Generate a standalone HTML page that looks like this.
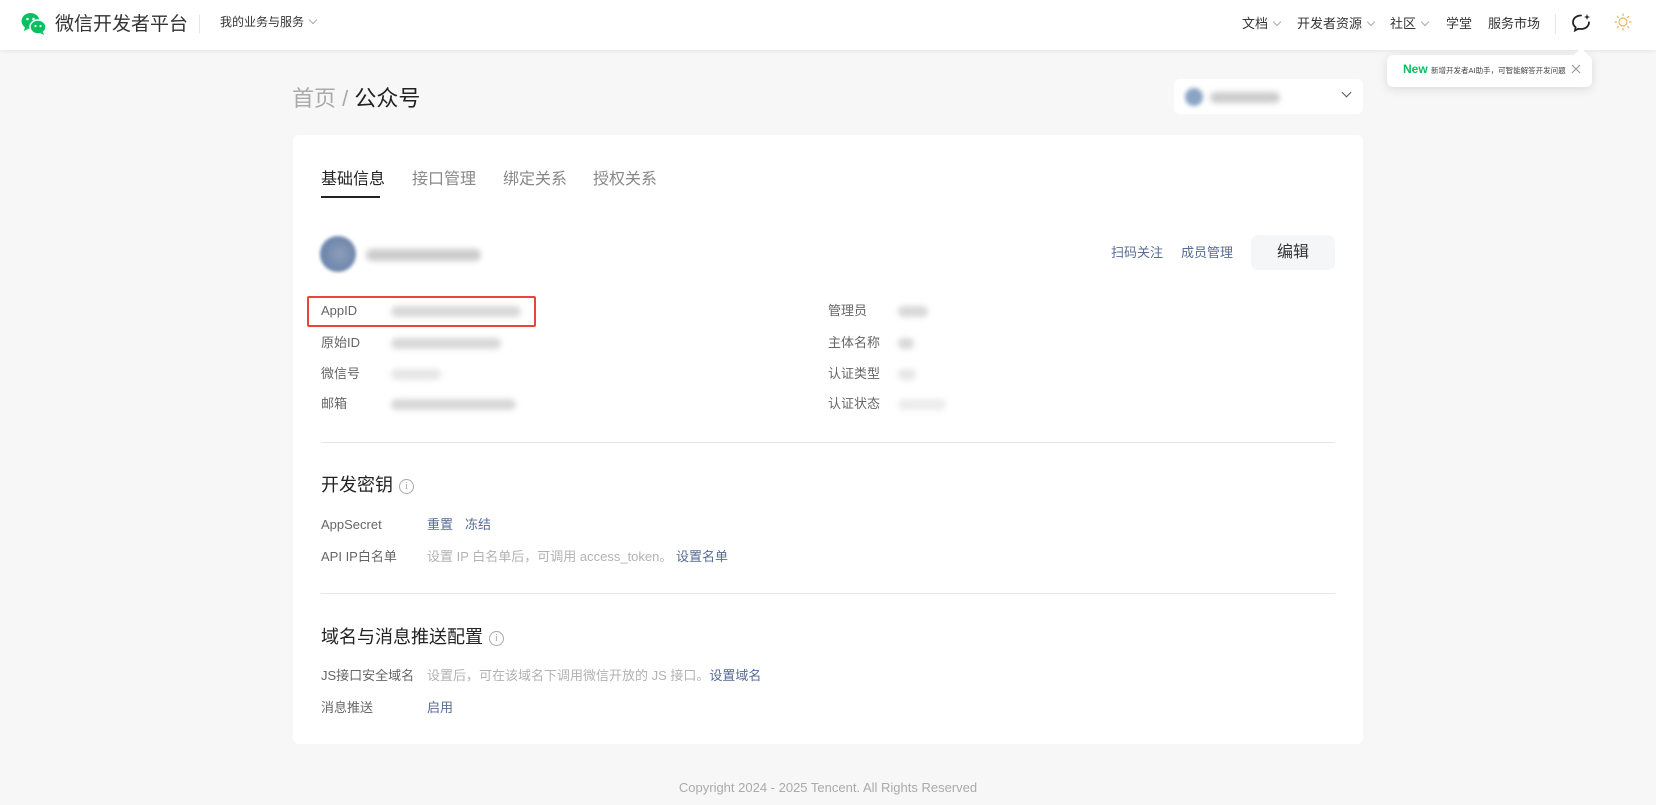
<!DOCTYPE html>
<html><head><meta charset="utf-8"><style>
*{margin:0;padding:0;box-sizing:border-box}
body{width:1656px;height:805px;background:#f7f7f7;font-family:"Liberation Sans","Noto Sans CJK SC",sans-serif;position:relative;overflow:hidden;color:#333}
.a{position:absolute;white-space:nowrap}
.hdr{position:absolute;left:0;top:0;width:1656px;height:50px;background:#fff;box-shadow:0 1px 4px rgba(0,0,0,.08)}
.nav{font-size:13px;color:#333;top:13px}
.car{display:inline-block;width:6px;height:6px;border-right:1px solid #aaa;border-bottom:1px solid #aaa;transform:rotate(45deg);margin-left:6px;position:relative;top:-3px}
.card{position:absolute;left:293px;top:135px;width:1070px;height:609px;background:#fff;border-radius:6px}
.lbl{font-size:13px;color:#666;line-height:18px}
.blur{position:absolute;height:11px;background:#d8d8d8;border-radius:6px;filter:blur(3px)}
.lnk{color:#576b95;font-size:13px;line-height:18px}
.gray{color:#b2b2b2;font-size:13px;line-height:18px}
.hr{position:absolute;left:321px;width:1014px;height:1px;background:#e7e7e7}
.ic{display:inline-block;width:15px;height:15px;border:1px solid #aaa;border-radius:50%;font-size:10px;color:#aaa;text-align:center;line-height:13px;margin-left:6px;vertical-align:2px;font-family:"Liberation Serif",serif}
</style></head><body>
<div class="hdr"></div>
<svg class="a" style="left:21px;top:12px" width="26" height="24" viewBox="0 0 26 24"><ellipse cx="9.5" cy="9" rx="9" ry="8" fill="#07c160"/><path d="M4 15l-1 4 4-2z" fill="#07c160"/><ellipse cx="17" cy="15" rx="8" ry="7" fill="#07c160" stroke="#fff" stroke-width="1.5"/><path d="M22 20l1 3-4-2z" fill="#07c160"/><circle cx="6.5" cy="7" r="1.3" fill="#fff"/><circle cx="12.5" cy="7" r="1.3" fill="#fff"/><circle cx="14.5" cy="14" r="1.1" fill="#fff"/><circle cx="19.5" cy="14" r="1.1" fill="#fff"/></svg>
<div class="a" style="left:55px;top:9px;font-size:19px;color:#333">微信开发者平台</div>
<div class="a" style="left:199px;top:15px;width:1px;height:18px;background:#e5e5e5"></div>
<div class="a" style="left:220px;top:13px;font-size:12px;color:#333">我的业务与服务<span class="car"></span></div>
<div class="a nav" style="left:1242px">文档<span class="car"></span></div>
<div class="a nav" style="left:1297px">开发者资源<span class="car"></span></div>
<div class="a nav" style="left:1390px">社区<span class="car"></span></div>
<div class="a nav" style="left:1446px">学堂</div>
<div class="a nav" style="left:1488px">服务市场</div>
<div class="a" style="left:1555px;top:14px;width:1px;height:20px;background:#e5e5e5"></div>
<svg class="a" style="left:1570px;top:12px" width="22" height="22" viewBox="0 0 22 22"><path d="M11 3.5C6.3 3.5 3 6.5 3 10.3c0 2 1 3.7 2.6 4.9L5 18.5l3.5-1.8c.8.2 1.6.3 2.5.3 4.7 0 8-3 8-6.7" fill="none" stroke="#222" stroke-width="1.8" stroke-linecap="round"/><path d="M17 2l.8 2.2L20 5l-2.2.8L17 8l-.8-2.2L14 5l2.2-.8z" fill="#222"/></svg>
<svg class="a" style="left:1613px;top:12px" width="20" height="20" viewBox="0 0 20 20" fill="none" stroke="#f0b35c" stroke-width="1.2"><circle cx="10" cy="10" r="4"/><path d="M10 1.5v2.5M10 16v2.5M1.5 10h2.5M16 10h2.5M4 4l1.7 1.7M14.3 14.3L16 16M4 16l1.7-1.7M14.3 5.7L16 4"/></svg>
<!-- popup -->
<div class="a" style="left:1387px;top:55px;width:205px;height:32px;background:#fff;border-radius:6px;box-shadow:0 2px 10px rgba(0,0,0,.12)"></div>
<div class="a" style="left:1576px;top:50px;width:10px;height:10px;background:#fff;transform:rotate(45deg)"></div>
<div class="a" style="left:1403px;top:62px;font-size:12px;color:#07c160;font-weight:bold">New <span style="font-size:7.5px;color:#444;font-weight:normal">新增开发者AI助手，可智能解答开发问题</span></div>
<svg class="a" style="left:1571px;top:64px" width="10" height="10" viewBox="0 0 10 10"><path d="M1 1l8 8M9 1l-8 8" stroke="#999" stroke-width="1.1"/></svg>
<!-- breadcrumb -->
<div class="a" style="left:292px;top:81px;font-size:22px;color:#aaa">首页 / <span style="color:#222">公众号</span></div>
<div class="a" style="left:1174px;top:79px;width:189px;height:35px;background:#fff;border-radius:6px"></div>
<div class="a" style="left:1185px;top:88px;width:18px;height:18px;border-radius:50%;background:#8aa4c4;filter:blur(2px)"></div>
<div class="blur" style="left:1210px;top:92px;width:70px;background:#ccc"></div>
<div class="a" style="left:1343px;top:89px;width:7px;height:7px;border-right:1.3px solid #555;border-bottom:1.3px solid #555;transform:rotate(45deg)"></div>
<div class="card"></div>
<!-- tabs -->
<div class="a" style="left:321px;top:165px;font-size:16px;color:#222">基础信息</div>
<div class="a" style="left:321px;top:196px;width:59px;height:2px;background:#222"></div>
<div class="a" style="left:412px;top:165px;font-size:16px;color:#888">接口管理</div>
<div class="a" style="left:503px;top:165px;font-size:16px;color:#888">绑定关系</div>
<div class="a" style="left:593px;top:165px;font-size:16px;color:#888">授权关系</div>
<!-- profile -->
<div class="a" style="left:320px;top:236px;width:36px;height:36px;border-radius:50%;background:radial-gradient(circle at 55% 50%,#8d9db8,#5b7aa6);filter:blur(1.5px)"></div>
<div class="blur" style="left:366px;top:249px;width:115px;height:12px;background:#ccc"></div>
<div class="a lnk" style="left:1111px;top:244px">扫码关注</div>
<div class="a lnk" style="left:1181px;top:244px">成员管理</div>
<div class="a" style="left:1251px;top:235px;width:84px;height:35px;background:#f5f6f8;border-radius:7px;text-align:center;line-height:35px;font-size:16px;color:#333">编辑</div>
<!-- info rows -->
<div class="a lbl" style="left:321px;top:302px">AppID</div>
<div class="blur" style="left:391px;top:306px;width:130px"></div>
<div class="a lbl" style="left:321px;top:334px">原始ID</div>
<div class="blur" style="left:391px;top:338px;width:110px"></div>
<div class="a lbl" style="left:321px;top:365px">微信号</div>
<div class="blur" style="left:391px;top:369px;width:50px;background:#e6e6e6"></div>
<div class="a lbl" style="left:321px;top:395px">邮箱</div>
<div class="blur" style="left:391px;top:399px;width:125px"></div>
<div class="a" style="left:307px;top:296px;width:229px;height:31px;border:2px solid #e8453c;border-radius:2px"></div>
<div class="a lbl" style="left:828px;top:302px">管理员</div>
<div class="blur" style="left:898px;top:306px;width:30px"></div>
<div class="a lbl" style="left:828px;top:334px">主体名称</div>
<div class="blur" style="left:898px;top:338px;width:16px"></div>
<div class="a lbl" style="left:828px;top:365px">认证类型</div>
<div class="blur" style="left:898px;top:369px;width:18px;background:#e6e6e6"></div>
<div class="a lbl" style="left:828px;top:395px">认证状态</div>
<div class="blur" style="left:898px;top:399px;width:48px;background:#ececec"></div>
<div class="hr" style="top:442px"></div>
<div class="a" style="left:321px;top:471px;font-size:18px;color:#222">开发密钥<span class="ic">i</span></div>
<div class="a lbl" style="left:321px;top:516px">AppSecret</div>
<div class="a lnk" style="left:427px;top:516px">重置</div>
<div class="a lnk" style="left:465px;top:516px">冻结</div>
<div class="a lbl" style="left:321px;top:548px">API IP白名单</div>
<div class="a gray" style="left:427px;top:548px">设置 IP 白名单后，可调用 access_token。 <span class="lnk">设置名单</span></div>
<div class="hr" style="top:593px"></div>
<div class="a" style="left:321px;top:623px;font-size:18px;color:#222">域名与消息推送配置<span class="ic">i</span></div>
<div class="a lbl" style="left:321px;top:667px">JS接口安全域名</div>
<div class="a gray" style="left:427px;top:667px">设置后，可在该域名下调用微信开放的 JS 接口。<span class="lnk">设置域名</span></div>
<div class="a lbl" style="left:321px;top:699px">消息推送</div>
<div class="a lnk" style="left:427px;top:699px">启用</div>
<div class="a" style="left:0;width:1656px;text-align:center;top:780px;font-size:13px;color:#aaa">Copyright 2024 - 2025 Tencent. All Rights Reserved</div>
</body></html>
